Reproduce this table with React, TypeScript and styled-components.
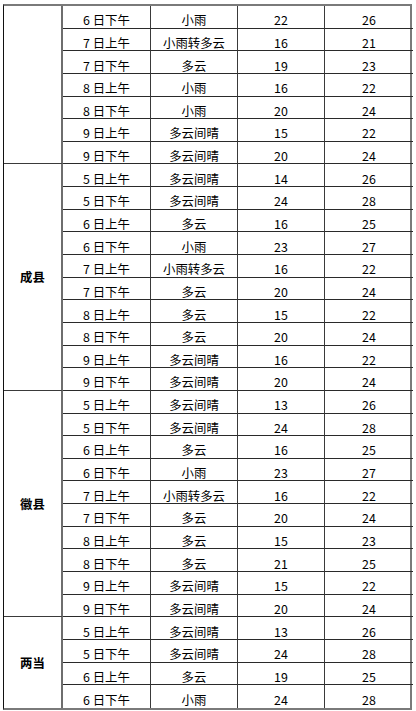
import React from "react";
import styled, { createGlobalStyle } from "styled-components";

const Global = createGlobalStyle`
  html, body { margin: 0; padding: 0; background: #ffffff; }
  body { font-family: "Noto Sans CJK SC", "Noto Sans", sans-serif; }
`;

const Page = styled.div`
  padding: 4px 0 0 3px;
  width: 416px;
  box-sizing: border-box;
`;

const Table = styled.div`
  display: grid;
  grid-template-columns: 59px 88px 87px 87px 88px;
  grid-auto-rows: 22.65px;
  width: 409px;
  border-top: 2px solid #7a7a7a;
  border-left: 1px solid #111;
  border-right: 2px solid #7a7a7a;
  border-bottom: 2px solid #7a7a7a;
  box-sizing: border-box;
  color: #000;
  font-size: 12.4px;
`;

const LabelCell = styled.div<{ $start: number; $span: number; $last: boolean }>`
  grid-row: ${(p) => p.$start} / span ${(p) => p.$span};
  grid-column: 1;
  display: flex;
  align-items: center;
  justify-content: center;
  font-weight: 700;
  border-right: 2px solid #6e6e6e;
  border-bottom: ${(p) => (p.$last ? "none" : "1.5px solid #3a3a3a")};
  box-sizing: border-box;
`;

const Cell = styled.div<{ $row: number; $col: number; $last: boolean }>`
  grid-row: ${(p) => p.$row};
  grid-column: ${(p) => p.$col};
  display: flex;
  align-items: flex-end;
  justify-content: center;
  line-height: 1;
  padding-bottom: 1px;
  box-sizing: border-box;
  border-bottom: ${(p) => (p.$last ? "none" : "1.5px solid #2a2a2a")};
  border-right: ${(p) => (p.$col === 5 ? "none" : "1.5px solid #3a3a3a")};
  white-space: nowrap;
`;

type Row = [string, string, number, number];
type Group = { name: string; rows: Row[] };

const groups: Group[] = [
  {
    name: "",
    rows: [
      ["6 日下午", "小雨", 22, 26],
      ["7 日上午", "小雨转多云", 16, 21],
      ["7 日下午", "多云", 19, 23],
      ["8 日上午", "小雨", 16, 22],
      ["8 日下午", "小雨", 20, 24],
      ["9 日上午", "多云间晴", 15, 22],
      ["9 日下午", "多云间晴", 20, 24],
    ],
  },
  {
    name: "成县",
    rows: [
      ["5 日上午", "多云间晴", 14, 26],
      ["5 日下午", "多云间晴", 24, 28],
      ["6 日上午", "多云", 16, 25],
      ["6 日下午", "小雨", 23, 27],
      ["7 日上午", "小雨转多云", 16, 22],
      ["7 日下午", "多云", 20, 24],
      ["8 日上午", "多云", 15, 22],
      ["8 日下午", "多云", 20, 24],
      ["9 日上午", "多云间晴", 16, 22],
      ["9 日下午", "多云间晴", 20, 24],
    ],
  },
  {
    name: "徽县",
    rows: [
      ["5 日上午", "多云间晴", 13, 26],
      ["5 日下午", "多云间晴", 24, 28],
      ["6 日上午", "多云", 16, 25],
      ["6 日下午", "小雨", 23, 27],
      ["7 日上午", "小雨转多云", 16, 22],
      ["7 日下午", "多云", 20, 24],
      ["8 日上午", "多云", 15, 23],
      ["8 日下午", "多云", 21, 25],
      ["9 日上午", "多云间晴", 15, 22],
      ["9 日下午", "多云间晴", 20, 24],
    ],
  },
  {
    name: "两当",
    rows: [
      ["5 日上午", "多云间晴", 13, 26],
      ["5 日下午", "多云间晴", 24, 28],
      ["6 日上午", "多云", 19, 25],
      ["6 日下午", "小雨", 24, 28],
    ],
  },
];

export default function App() {
  let rowIndex = 1;
  return (
    <>
      <Global />
      <Page>
        <Table>
          {groups.map((g, gi) => {
            const lastGroup = gi === groups.length - 1;
            const start = rowIndex;
            rowIndex += g.rows.length;
            return (
              <React.Fragment key={gi}>
                <LabelCell $start={start} $span={g.rows.length} $last={lastGroup}>
                  {g.name}
                </LabelCell>
                {g.rows.map((r, ri) => {
                  const last = lastGroup && ri === g.rows.length - 1;
                  const row = start + ri;
                  return (
                    <React.Fragment key={ri}>
                      <Cell $row={row} $col={2} $last={last}>{r[0]}</Cell>
                      <Cell $row={row} $col={3} $last={last}>{r[1]}</Cell>
                      <Cell $row={row} $col={4} $last={last}>{r[2]}</Cell>
                      <Cell $row={row} $col={5} $last={last}>{r[3]}</Cell>
                    </React.Fragment>
                  );
                })}
              </React.Fragment>
            );
          })}
        </Table>
      </Page>
    </>
  );
}
